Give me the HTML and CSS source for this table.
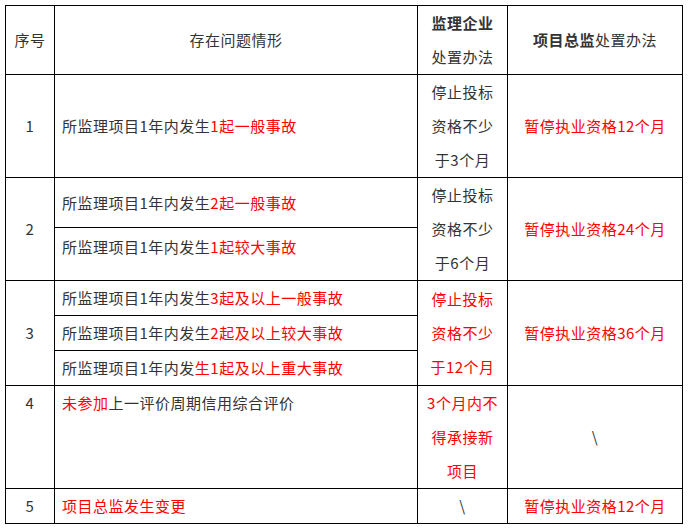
FILE: index.html
```html
<!DOCTYPE html>
<html lang="zh-CN">
<head>
<meta charset="utf-8">
<title>监理处置办法</title>
<link rel="stylesheet" href="styles.css">
</head>
<body>
<table class="grid">
  <colgroup>
    <col class="c1"><col class="c2"><col class="c3"><col class="c4">
  </colgroup>
  <tr class="head">
    <td class="num">序号</td>
    <td class="center">存在问题情形</td>
    <td class="center"><b>监理企业</b><br>处置办法</td>
    <td class="center"><b>项目总监</b>处置办法</td>
  </tr>
  <tr class="r3">
    <td class="num">1</td>
    <td class="desc">所监理项目1年内发生<span class="red">1起一般事故</span></td>
    <td class="center">停止投标资格不少于3个月</td>
    <td class="center red">暂停执业资格12个月</td>
  </tr>
  <tr class="r2a">
    <td class="num" rowspan="2">2</td>
    <td class="desc">所监理项目1年内发生<span class="red">2起一般事故</span></td>
    <td class="center" rowspan="2">停止投标资格不少于6个月</td>
    <td class="center red" rowspan="2">暂停执业资格24个月</td>
  </tr>
  <tr class="r2b">
    <td class="desc top">所监理项目1年内发生<span class="red">1起较大事故</span></td>
  </tr>
  <tr>
    <td class="num" rowspan="3">3</td>
    <td class="desc">所监理项目1年内发生<span class="red">3起及以上一般事故</span></td>
    <td class="center red" rowspan="3">停止投标资格不少于12个月</td>
    <td class="center red" rowspan="3">暂停执业资格36个月</td>
  </tr>
  <tr>
    <td class="desc">所监理项目1年内发生<span class="red">2起及以上较大事故</span></td>
  </tr>
  <tr>
    <td class="desc">所监理项目1年内发<span class="red">生1起及以上重大事故</span></td>
  </tr>
  <tr>
    <td class="num top">4</td>
    <td class="desc top"><span class="red">未参加</span>上一评价周期信用综合评价</td>
    <td class="center red top">3个月内不得承接新项目</td>
    <td class="center">\</td>
  </tr>
  <tr>
    <td class="num">5</td>
    <td class="desc red">项目总监发生变更</td>
    <td class="center">\</td>
    <td class="center red">暂停执业资格12个月</td>
  </tr>
</table>
</body>
</html>
```
FILE: styles.css
```css
html, body {
  margin: 0;
  background: #ffffff;
}
body {
  padding: 5px 0 0 5px;
  font-family: "Noto Sans CJK SC", "Noto Sans", sans-serif;
  font-size: 15px;
  letter-spacing: 0.5px;
  color: #333333;
}
.grid {
  border-collapse: collapse;
  table-layout: fixed;
  width: 677px;
}
.c1 { width: 49px; }
.c2 { width: 363px; }
.c3 { width: 90px; }
.c4 { width: 175px; }
.grid td {
  border: 1px solid #000000;
  padding: 0 7px;
  line-height: 34px;
  vertical-align: middle;
}
.grid td.num { text-align: center; padding: 0; }
.grid td.center { text-align: center; }
.grid td.desc { text-align: left; padding-left: 7px; }
.grid td.top { vertical-align: top; }
.r2b td.top { padding-top: 2px; }
.red { color: #ff0000; }
b { font-weight: bold; }
```
